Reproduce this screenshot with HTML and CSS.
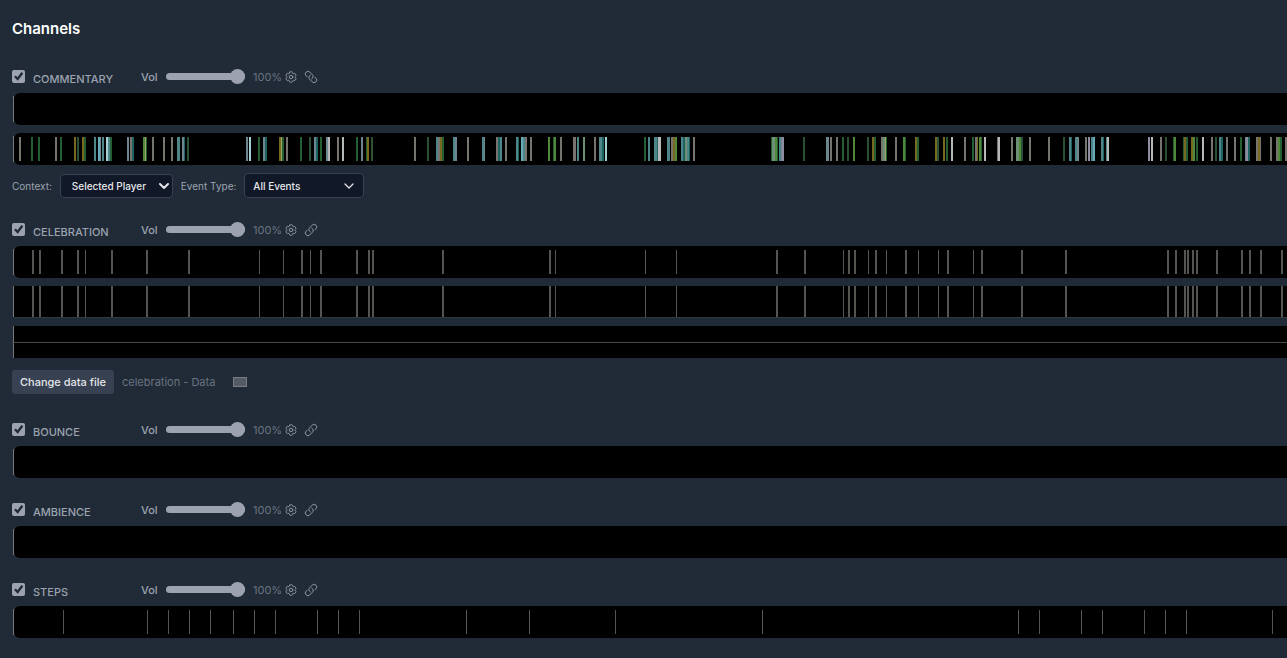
FILE: index.html
```html
<!DOCTYPE html>
<html lang="en">

<head>
    <meta charset="UTF-8" />
    <meta name="viewport" content="width=device-width, initial-scale=1" />
    <title>Channels</title>
    <link rel="stylesheet" href="styles.css">
</head>

<body>

    <svg class="symbols" aria-hidden="true">
        <symbol id="icon-gear" viewBox="0 0 24 24">
            <path d="M9.594 3.94c.09-.542.56-.94 1.11-.94h2.593c.55 0 1.02.398 1.11.94l.213 1.281c.063.374.313.686.645.87.074.04.147.083.22.127.325.196.72.257 1.075.124l1.217-.456a1.125 1.125 0 0 1 1.37.49l1.296 2.247a1.125 1.125 0 0 1-.26 1.431l-1.003.827c-.293.241-.438.613-.43.992a7.723 7.723 0 0 1 0 .255c-.008.378.137.75.43.991l1.004.827c.424.35.534.955.26 1.43l-1.298 2.247a1.125 1.125 0 0 1-1.369.491l-1.217-.456c-.355-.133-.75-.072-1.076.124a6.47 6.47 0 0 1-.22.128c-.331.183-.581.495-.644.869l-.213 1.281c-.09.543-.56.94-1.11.94h-2.594c-.55 0-1.019-.398-1.11-.94l-.213-1.281c-.062-.374-.312-.686-.644-.87a6.52 6.52 0 0 1-.22-.127c-.325-.196-.72-.257-1.076-.124l-1.217.456a1.125 1.125 0 0 1-1.369-.49l-1.297-2.247a1.125 1.125 0 0 1 .26-1.431l1.004-.827c.292-.24.437-.613.43-.991a6.932 6.932 0 0 1 0-.255c.007-.38-.138-.751-.43-.992l-1.004-.827a1.125 1.125 0 0 1-.26-1.43l1.297-2.247a1.125 1.125 0 0 1 1.37-.491l1.216.456c.356.133.751.072 1.076-.124.072-.044.146-.086.22-.128.332-.183.582-.495.644-.869l.214-1.28Z" />
            <path d="M15 12a3 3 0 1 1-6 0 3 3 0 0 1 6 0Z" />
        </symbol>
        <symbol id="icon-link" viewBox="0 0 24 24">
            <path d="M13.19 8.688a4.5 4.5 0 0 1 1.242 7.244l-4.5 4.5a4.5 4.5 0 0 1-6.364-6.364l1.757-1.757m13.35-.622 1.757-1.757a4.5 4.5 0 0 0-6.364-6.364l-4.5 4.5a4.5 4.5 0 0 0 1.242 7.244" />
        </symbol>
        <symbol id="icon-chevron" viewBox="0 0 10 10">
            <path d="M1 3l4 4 4-4" />
        </symbol>
    </svg>

    <main class="channels">
        <h1>Channels</h1>

        <section class="channel">
            <div class="channel-header">
                <label class="channel-name"><input type="checkbox" checked><span>COMMENTARY</span></label>
                <label class="volume">Vol <input type="range" min="0" max="100" value="100"></label>
                <output>100%</output>
                <button class="icon-button" aria-label="Settings"><svg><use href="#icon-gear" /></svg></button>
                <button class="icon-button flipped" aria-label="Unlink"><svg><use href="#icon-link" /></svg></button>
            </div>
            <div class="tracks">
                <div class="track"></div>
                <div class="track" data-events="commentary"></div>
            </div>
            <div class="filters">
                <label for="context">Context:</label>
                <div class="select context">
                    <select id="context">
                        <option>Selected Player</option>
                    </select>
                    <svg><use href="#icon-chevron" /></svg>
                </div>
                <label for="event-type">Event Type:</label>
                <div class="select event-type">
                    <select id="event-type">
                        <option>All Events</option>
                    </select>
                    <svg><use href="#icon-chevron" /></svg>
                </div>
            </div>
        </section>

        <section class="channel">
            <div class="channel-header">
                <label class="channel-name"><input type="checkbox" checked><span>CELEBRATION</span></label>
                <label class="volume">Vol <input type="range" min="0" max="100" value="100"></label>
                <output>100%</output>
                <button class="icon-button" aria-label="Settings"><svg><use href="#icon-gear" /></svg></button>
                <button class="icon-button" aria-label="Link"><svg><use href="#icon-link" /></svg></button>
            </div>
            <div class="tracks">
                <div class="track" data-events="celebration"></div>
                <div class="track square full underline" data-events="celebration"></div>
                <div class="track square midline"></div>
            </div>
            <div class="data-file">
                <button class="change-file">Change data file</button>
                <span>celebration - Data</span>
                <input type="color" value="#555b66" aria-label="Data color">
            </div>
        </section>

        <section class="channel">
            <div class="channel-header">
                <label class="channel-name"><input type="checkbox" checked><span>BOUNCE</span></label>
                <label class="volume">Vol <input type="range" min="0" max="100" value="100"></label>
                <output>100%</output>
                <button class="icon-button" aria-label="Settings"><svg><use href="#icon-gear" /></svg></button>
                <button class="icon-button" aria-label="Link"><svg><use href="#icon-link" /></svg></button>
            </div>
            <div class="tracks">
                <div class="track"></div>
            </div>
        </section>

        <section class="channel">
            <div class="channel-header">
                <label class="channel-name"><input type="checkbox" checked><span>AMBIENCE</span></label>
                <label class="volume">Vol <input type="range" min="0" max="100" value="100"></label>
                <output>100%</output>
                <button class="icon-button" aria-label="Settings"><svg><use href="#icon-gear" /></svg></button>
                <button class="icon-button" aria-label="Link"><svg><use href="#icon-link" /></svg></button>
            </div>
            <div class="tracks">
                <div class="track"></div>
            </div>
        </section>

        <section class="channel">
            <div class="channel-header">
                <label class="channel-name"><input type="checkbox" checked><span>STEPS</span></label>
                <label class="volume">Vol <input type="range" min="0" max="100" value="100"></label>
                <output>100%</output>
                <button class="icon-button" aria-label="Settings"><svg><use href="#icon-gear" /></svg></button>
                <button class="icon-button" aria-label="Link"><svg><use href="#icon-link" /></svg></button>
            </div>
            <div class="tracks">
                <div class="track" data-events="steps"></div>
            </div>
        </section>
    </main>

    <script src="script.js"></script>
</body>

</html>
```
FILE: styles.css
```css
* {
    box-sizing: border-box;
}

body {
    margin: 0;
    background-color: #202b37;
    color: #9ca3af;
    font-family: Inter, "Liberation Sans", sans-serif;
    font-size: 11px;
    line-height: 16px;
}

button,
input,
select {
    margin: 0;
    padding: 0;
    border: none;
    font: inherit;
}

.symbols {
    display: none;
}

.channels {
    display: flex;
    flex-direction: column;
    gap: 20px;
    padding: 17px 0 20px 12px;
    overflow: hidden;
}

h1 {
    margin: 0 0 4px;
    color: #fff;
    font-size: 15px;
    font-weight: 600;
    line-height: 24px;
}

.channel-header {
    display: flex;
    align-items: center;
    height: 23px;
    margin-bottom: 5px;
}

.channel-name {
    display: flex;
    align-items: center;
    gap: 8px;
    width: 129px;
    font-weight: 500;
}

.channel-name span {
    padding-top: 4px;
}

.channel-name input {
    appearance: none;
    width: 13px;
    height: 13px;
    border-radius: 2px;
    background-color: #9ca3af;
}

/* check mark */
.channel-name input:checked::before {
    content: "";
    display: block;
    width: 13px;
    height: 13px;
    background-color: #202b37;
    clip-path: polygon(16% 54%, 29% 42%, 42% 56%, 72% 16%, 87% 27%, 44% 83%);
}

.volume {
    display: flex;
    align-items: center;
    gap: 8px;
    width: 104px;
    font-weight: 500;
}

.volume input {
    appearance: none;
    flex: none;
    width: 79px;
    height: 16px;
    background: none;
}

.volume input::-webkit-slider-runnable-track {
    height: 7px;
    border-radius: 4px;
    background-color: #9ca3af;
}

.volume input::-webkit-slider-thumb {
    appearance: none;
    width: 15px;
    height: 15px;
    margin-top: -4px;
    border-radius: 50%;
    background-color: #9ca3af;
}

output {
    width: 31px;
    margin-left: 8px;
    color: #6b7280;
}

.icon-button {
    width: 14px;
    height: 14px;
    margin-right: 6px;
    background: none;
    color: #9ca3af;
    cursor: pointer;
}

.icon-button.flipped {
    transform: scaleX(-1);
}

svg {
    display: block;
    width: 14px;
    height: 14px;
    fill: none;
    stroke: currentColor;
    stroke-width: 1.5;
    stroke-linecap: round;
    stroke-linejoin: round;
}

.tracks {
    display: flex;
    flex-direction: column;
    gap: 8px;
    padding-left: 2px;
}

.track {
    position: relative;
    height: 32px;
    border-radius: 6px 0 0 6px;
    background-color: #000;
}

.track.square {
    border-radius: 0;
}

.track.underline {
    border-bottom: 1px solid #303c42;
}

/* playhead */
.track::before {
    content: "";
    position: absolute;
    top: 3px;
    bottom: 3px;
    left: -1px;
    width: 1px;
    background-color: #777;
}

.track.square::before {
    top: 0;
    bottom: 0;
}

.track.midline::after {
    content: "";
    position: absolute;
    top: 16px;
    left: -2px;
    right: 0;
    height: 1px;
    background-color: #4a4a48;
}

.track svg {
    width: 100%;
    height: 100%;
    padding: 4px 0;
    stroke: none;
}

.track.full svg {
    padding: 0;
}

.filters {
    display: flex;
    align-items: center;
    gap: 8px;
    height: 25px;
    margin-top: 8px;
    font-size: 10px;
}

.select {
    display: grid;
    align-items: center;
}

.select select,
.select svg {
    grid-area: 1 / 1;
}

.select select {
    appearance: none;
    width: 100%;
    height: 24px;
    border: 1px solid #374151;
    border-radius: 4px;
    background-color: #111827;
    color: #e5e7eb;
    font-weight: 500;
}

.select svg {
    justify-self: end;
    width: 10px;
    height: 10px;
    color: #e5e7eb;
    pointer-events: none;
}

.select.context {
    width: 113px;
}

.select.context select {
    padding-left: 11px;
}

.select.context svg {
    margin-right: 4px;
    stroke-width: 2;
}

.select.event-type {
    width: 120px;
}

.select.event-type select {
    height: 25px;
    padding-left: 8px;
}

.select.event-type svg {
    margin-right: 10px;
    stroke-width: 1.2;
}

.data-file {
    display: flex;
    align-items: center;
    gap: 8px;
    padding: 12px 0 4px;
    color: #6b7280;
}

.change-file {
    height: 24px;
    padding: 0 8px;
    border-radius: 3px;
    background-color: #374151;
    color: #e5e7eb;
    font-weight: 500;
    cursor: pointer;
}

.data-file input {
    appearance: none;
    width: 14px;
    height: 10px;
    margin-left: 10px;
    border: 1px solid #7b7f85;
    background: none;
}

.data-file input::-webkit-color-swatch-wrapper {
    padding: 0;
}

.data-file input::-webkit-color-swatch {
    border: none;
    border-radius: 0;
}
```
FILE: script.js
```js
const colors = {
    g: "#77736f", // grey
    w: "#b4b8b6", // white
    l: "#8f8ba0", // lilac
    d: "#2c5033", // dark green
    n: "#235f33", // green
    m: "#4f8838", // lime
    y: "#9aa866", // pale lime
    s: "#6c8f76", // sage
    o: "#776a20", // olive
    t: "#4d8589", // teal
    b: "#6e868e", // slate
    k: "#1c6263", // deep teal
    c: "#68aab8", // cyan
    p: "#a4cfd3"  // pale cyan
};

// width of the gutter that holds the playhead
const GUTTER = 2;

// [start, width, color]; start is in timeline pixels
const events = {
    commentary: [
        [7, 2, "g"], [19, 2, "n"], [26, 2, "n"], [43, 2, "g"], [48, 2, "n"], [62, 2, "o"], [65, 2, "d"],
        [70, 2, "o"], [72, 2, "n"], [82, 2, "t"], [86, 2, "c"], [88, 1, "b"], [90, 2, "t"], [94, 2, "p"],
        [96, 2, "t"], [98, 2, "n"], [115, 2, "b"], [118, 2, "g"], [120, 2, "k"], [131, 2, "m"], [133, 1, "y"],
        [134, 1, "n"], [140, 2, "g"], [151, 2, "g"], [159, 2, "g"], [165, 3, "t"], [170, 2, "b"], [172, 1, "k"],
        [175, 2, "d"], [234, 2, "b"], [237, 2, "p"], [246, 2, "n"], [251, 2, "b"], [253, 2, "k"], [267, 2, "o"],
        [269, 1, "y"], [270, 2, "n"], [274, 2, "g"], [288, 2, "n"], [297, 2, "d"], [302, 2, "b"], [304, 2, "k"],
        [308, 2, "n"], [314, 2, "b"], [316, 2, "w"], [325, 2, "g"], [330, 2, "w"], [344, 2, "n"], [349, 2, "b"],
        [354, 2, "n"], [355, 2, "o"], [359, 2, "d"], [402, 2, "g"], [415, 2, "d"], [424, 2, "t"], [426, 2, "g"],
        [428, 2, "o"], [430, 2, "n"], [441, 2, "t"], [443, 2, "b"], [455, 2, "g"], [470, 2, "t"], [472, 1, "b"],
        [484, 2, "g"], [486, 2, "k"], [488, 2, "t"], [493, 2, "g"], [504, 2, "t"], [506, 1, "k"], [509, 2, "c"],
        [511, 2, "t"], [513, 2, "g"], [518, 2, "g"], [536, 2, "m"], [541, 1, "n"], [542, 2, "m"], [548, 2, "g"],
        [561, 3, "g"], [565, 2, "t"], [571, 2, "s"], [582, 2, "g"], [587, 3, "t"], [590, 2, "k"], [593, 2, "p"],
        [632, 2, "n"], [636, 2, "t"], [642, 3, "t"], [645, 1, "k"], [646, 3, "w"], [655, 3, "t"], [659, 2, "g"],
        [661, 2, "o"], [663, 2, "m"], [669, 2, "t"], [671, 2, "k"], [673, 2, "s"], [675, 2, "t"], [677, 1, "k"],
        [681, 2, "g"], [759, 1, "n"], [760, 3, "s"], [763, 2, "m"], [765, 1, "n"], [767, 2, "t"], [769, 1, "b"],
        [770, 2, "l"], [791, 2, "d"], [814, 3, "b"], [818, 2, "g"], [824, 2, "g"], [830, 2, "n"], [835, 2, "d"],
        [841, 2, "m"], [855, 2, "d"], [860, 2, "o"], [862, 2, "n"], [869, 2, "g"], [871, 2, "s"], [873, 1, "y"],
        [874, 1, "n"], [883, 2, "g"], [891, 2, "m"], [893, 1, "n"], [903, 2, "o"], [905, 2, "n"], [923, 2, "o"],
        [925, 2, "d"], [931, 2, "o"], [934, 2, "n"], [939, 2, "w"], [952, 2, "g"], [960, 2, "n"], [963, 2, "g"],
        [965, 1, "o"], [967, 2, "m"], [969, 1, "n"], [972, 2, "w"], [985, 1, "g"], [986, 2, "w"], [999, 2, "g"],
        [1004, 3, "s"], [1007, 2, "m"], [1009, 2, "d"], [1017, 2, "g"], [1036, 2, "g"], [1051, 2, "d"],
        [1057, 2, "t"], [1059, 1, "k"], [1063, 2, "t"], [1065, 2, "b"], [1073, 2, "g"], [1076, 2, "l"],
        [1079, 2, "t"], [1081, 2, "c"], [1089, 2, "t"], [1091, 1, "k"], [1094, 2, "t"], [1095, 2, "w"],
        [1136, 2, "l"], [1139, 2, "w"], [1148, 2, "g"], [1153, 2, "d"], [1161, 1, "n"], [1162, 2, "m"],
        [1171, 1, "n"], [1172, 2, "o"], [1174, 2, "n"], [1179, 2, "o"], [1181, 2, "m"], [1184, 2, "n"],
        [1190, 2, "w"], [1199, 2, "g"], [1203, 2, "d"], [1207, 2, "t"], [1209, 2, "k"], [1214, 2, "g"],
        [1222, 2, "g"], [1228, 2, "n"], [1233, 2, "b"], [1234, 2, "l"], [1236, 2, "k"], [1244, 2, "g"],
        [1246, 2, "o"], [1248, 1, "g"], [1258, 2, "g"], [1264, 2, "g"], [1266, 2, "m"], [1268, 2, "n"], [1273, 2, "g"]
    ],
    celebration: [
        [20, 2], [27, 2], [49, 2], [65, 2], [73, 1], [99, 2], [134, 2], [176, 2], [247, 1], [271, 1], [289, 2],
        [298, 1], [308, 2], [344, 2], [356, 2], [360, 2], [430, 2], [537, 2], [543, 1], [633, 1], [664, 1],
        [764, 2], [792, 2], [831, 1], [836, 2], [842, 2], [856, 1], [863, 2], [874, 1], [893, 2], [906, 1],
        [926, 1], [935, 2], [961, 1], [969, 2], [1009, 2], [1053, 2], [1155, 2], [1163, 2], [1172, 2], [1175, 2],
        [1180, 2], [1184, 2], [1204, 2], [1229, 2], [1237, 2], [1248, 2], [1269, 2]
    ],
    steps: [
        [51, 1], [135, 1], [156, 1], [177, 1], [198, 1], [221, 1], [242, 1], [263, 1], [305, 1], [326, 1],
        [347, 1], [454, 1], [517, 1], [603, 1], [750, 1], [1006, 1], [1027, 1], [1069, 1], [1090, 1], [1132, 1],
        [1153, 1], [1174, 1], [1260, 1]
    ]
};

function drawTrack(track) {
    const ns = "http://www.w3.org/2000/svg";
    const svg = document.createElementNS(ns, "svg");
    events[track.dataset.events].forEach(([start, width, color]) => {
        const bar = document.createElementNS(ns, "rect");
        bar.setAttribute("x", start - GUTTER);
        bar.setAttribute("width", width);
        bar.setAttribute("height", "100%");
        bar.setAttribute("fill", colors[color] || "#555450");
        svg.appendChild(bar);
    });
    track.appendChild(svg);
}

document.querySelectorAll(".track[data-events]").forEach(drawTrack);

document.querySelectorAll(".channel").forEach(channel => {
    const slider = channel.querySelector(".volume input");
    const output = channel.querySelector("output");
    slider.addEventListener("input", () => {
        output.textContent = slider.value + "%";
    });
});
```
